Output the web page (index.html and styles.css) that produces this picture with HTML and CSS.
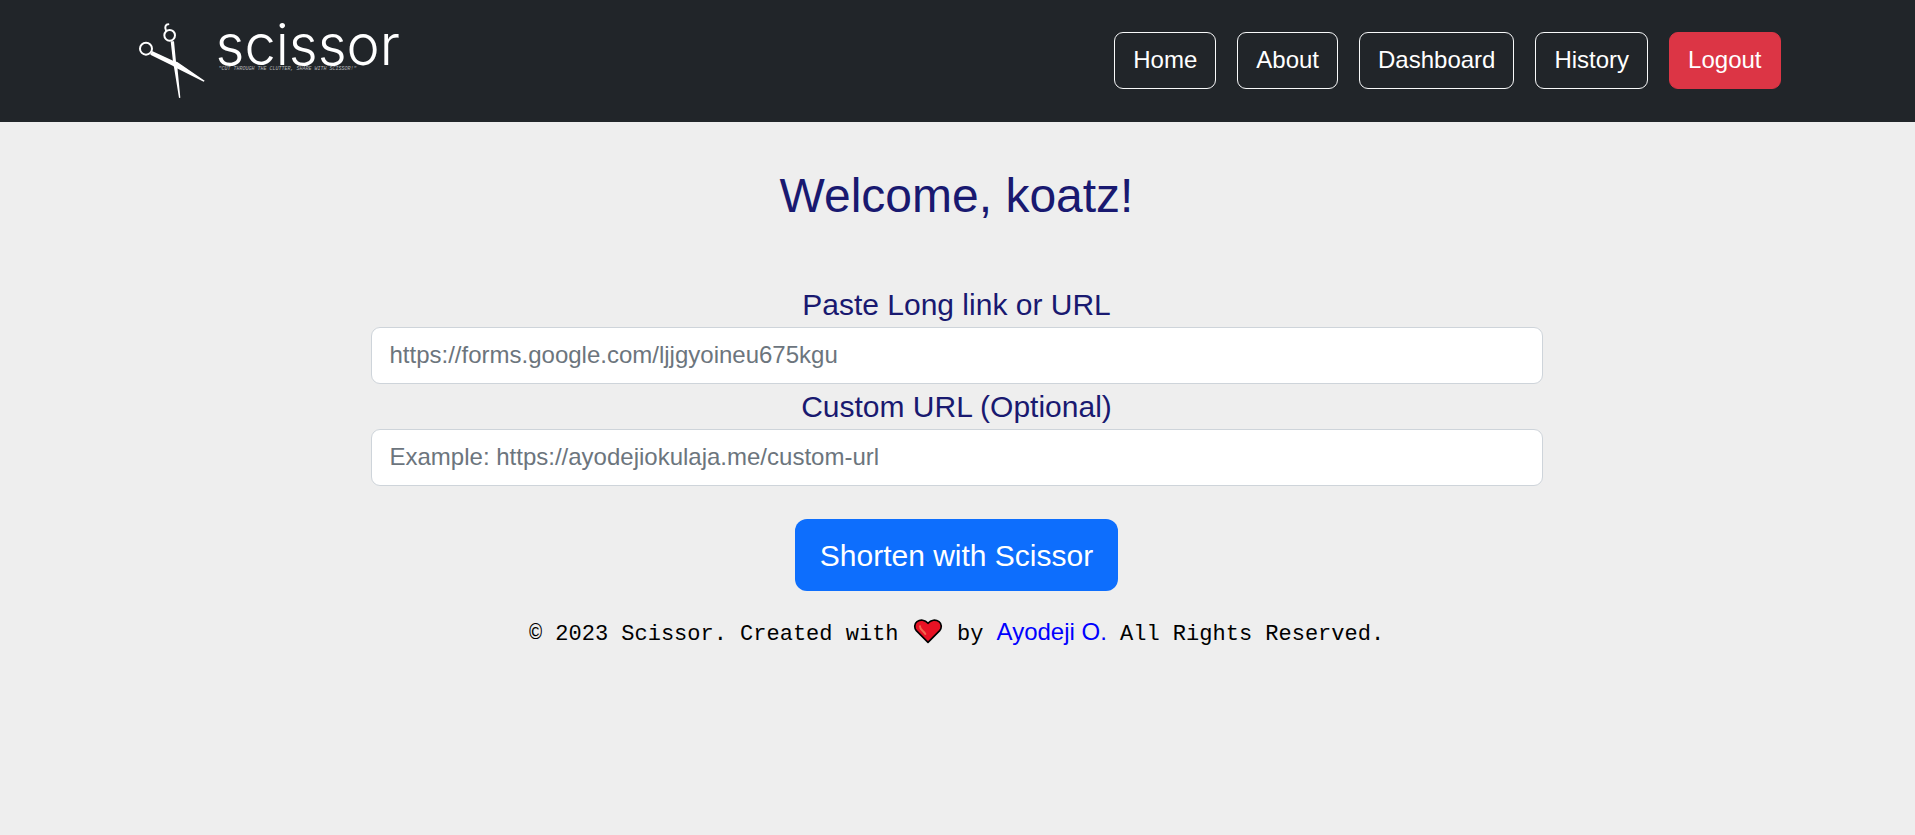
FILE: index.html
```html
<!DOCTYPE html>
<html lang="en">
<head>
<meta charset="utf-8">
<meta name="viewport" content="width=device-width, initial-scale=1">
<title>Scissor</title>
<link rel="stylesheet" href="styles.css">
</head>
<body>
<header class="navbar">
  <div class="container">
    <a class="brand" href="#">
      <svg class="brand-icon" viewBox="24 24 204 228" aria-hidden="true">
        <g fill="none" stroke="#fff" stroke-linecap="round">
          <circle cx="48" cy="101" r="18" stroke-width="6"/>
          <circle cx="119" cy="61" r="16" stroke-width="6"/>
          <path d="M108 46C103 36 107 28 115 28" stroke-width="6"/>
        </g>
        <path fill="#fff" d="M66 108 131 138 142 141 224 197 221 200 139 159 128 152 61 119Z"/>
        <path fill="#fff" d="M122 79 132 79 138 140 142 155 151 248 147 249 132 157 129 140Z"/>
      </svg>
      <span class="brand-text">
        <span class="brand-name">scissor</span>
        <span class="brand-tagline">"CUT THROUGH THE CLUTTER, SHARE WITH SCISSOR!"</span>
      </span>
    </a>
    <nav class="nav">
      <a class="nav-link" href="#">Home</a>
      <a class="nav-link" href="#">About</a>
      <a class="nav-link" href="#">Dashboard</a>
      <a class="nav-link" href="#">History</a>
      <a class="nav-link nav-link-danger" href="#">Logout</a>
    </nav>
  </div>
</header>
<div class="page">
  <main class="main">
    <h1 class="title">Welcome, koatz!</h1>
    <form class="form">
      <label class="label" for="long-url">Paste Long link or URL</label>
      <input class="input" id="long-url" type="text" placeholder="https://forms.google.com/ljjgyoineu675kgu">
      <label class="label" for="custom-url">Custom URL (Optional)</label>
      <input class="input" id="custom-url" type="text" placeholder="Example: https://ayodejiokulaja.me/custom-url">
      <button class="submit" type="button">Shorten with Scissor</button>
    </form>
  </main>
  <footer class="footer">© 2023 Scissor. Created with
    <svg class="heart" viewBox="-3 0 96 75" role="img" aria-label="love">
      <path fill="#e81224" stroke="#000" stroke-width="5" stroke-linejoin="round" d="M45 70 10 35C3 27 4 14 12 8 22 1 36 2 45 13 54 2 68 1 78 8 86 14 87 27 80 35Z"/>
      <path fill="none" stroke="#f0694f" stroke-width="6" stroke-linecap="round" d="M21 22C20 31 31 35 37 45"/>
    </svg>
    by <a class="author" href="#">Ayodeji O.</a> All Rights Reserved.</footer>
</div>
</body>
</html>
```
FILE: styles.css
```css
* { box-sizing: border-box; }

body {
  margin: 0;
  background: #eee;
  color: #000;
  font-family: "Liberation Sans", Arial, sans-serif;
  font-size: 24px;
  line-height: 36px;
}

.navbar {
  padding: 22px 26px 23px 24px;
  background: #212529;
}

.container {
  display: flex;
  align-items: center;
  justify-content: space-between;
  max-width: 1648px;
  margin: 0 auto;
}

.brand {
  display: flex;
  gap: 10px;
  padding: 1px 0 0 5px;
  color: #fff;
  text-decoration: none;
}

.brand-icon {
  width: 68px;
  height: 76px;
}

.brand-text {
  display: flex;
  flex-direction: column;
}

.brand-name {
  font-family: Inter, sans-serif;
  font-size: 56px;
  font-weight: 300;
  line-height: 44px;
}

.brand-tagline {
  padding-left: 3px;
  color: #b5b7b9;
  font-family: "Liberation Mono", monospace;
  font-size: 5px;
  font-style: italic;
  line-height: 4px;
}

.nav {
  display: flex;
  flex-wrap: wrap;
  gap: 21px;
}

.nav-link {
  padding: 9px 18px 10px;
  border: 1px solid #f8f9fa;
  border-radius: 9px;
  color: #fff;
  text-decoration: none;
}

.nav-link-danger {
  border-color: #dc3545;
  background: #dc3545;
}

.page {
  padding: 45px 26px 0 24px;
}

.main {
  max-width: 1172px;
  margin: 0 auto;
}

.title {
  margin: 0 0 57px;
  color: #191970;
  font-size: 48px;
  font-weight: 400;
  line-height: 58px;
  text-align: center;
}

.form {
  display: flex;
  flex-direction: column;
  align-items: center;
}

.label {
  color: #191970;
  font-size: 30px;
  line-height: 45px;
}

.input {
  width: 100%;
  height: 57px;
  padding: 8px 18px 10px;
  border: 1px solid #ced4da;
  border-radius: 9px;
  background: #fff;
  color: #212529;
  font: inherit;
}

.input::placeholder {
  color: #6c757d;
  opacity: 1;
}

.submit {
  margin-top: 33px;
  padding: 14px 25px 13px;
  border: 0;
  border-radius: 12px;
  background: #0d6efd;
  color: #fff;
  font-family: inherit;
  font-size: 30px;
  line-height: 45px;
}

.footer {
  padding: 23px 0;
  font-family: "Liberation Mono", monospace;
  font-size: 22px;
  text-align: center;
}

.heart {
  width: 32px;
  height: 25px;
  vertical-align: -4px;
}

.author {
  color: #00f;
  font-family: "Liberation Sans", Arial, sans-serif;
  font-size: 24px;
  text-decoration: none;
}
```
